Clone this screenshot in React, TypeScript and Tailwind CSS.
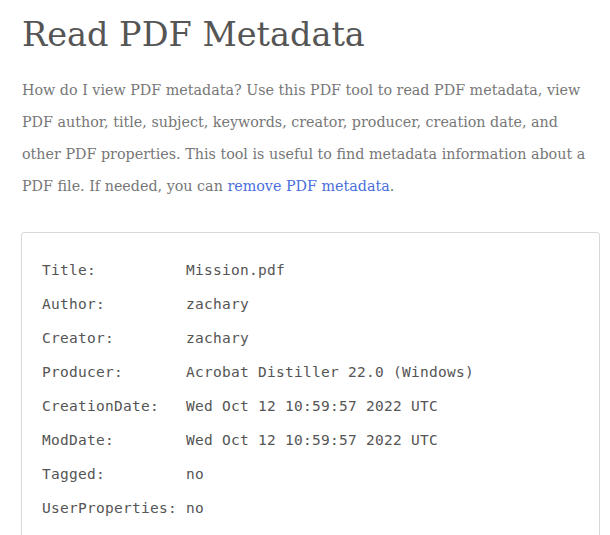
import React from "react";

const rows: [string, string][] = [
  ["Title:", "Mission.pdf"],
  ["Author:", "zachary"],
  ["Creator:", "zachary"],
  ["Producer:", "Acrobat Distiller 22.0 (Windows)"],
  ["CreationDate:", "Wed Oct 12 10:59:57 2022 UTC"],
  ["ModDate:", "Wed Oct 12 10:59:57 2022 UTC"],
  ["Tagged:", "no"],
  ["UserProperties:", "no"],
];

export default function App() {
  return (
    <div className="bg-white w-[610px] h-[535px] overflow-hidden pl-[22px] pr-[10px]">
      <h1 className="text-[33.5px] leading-[48px] pt-[11px] text-[#555] font-['DejaVu_Serif',serif] font-normal">
        Read PDF Metadata
      </h1>
      <p className="mt-[15px] text-[14.3px] leading-[32px] text-[#777] font-['DejaVu_Serif',serif]">
        How do I view PDF metadata? Use this PDF tool to read PDF metadata, view PDF author, title, subject,
        keywords, creator, producer, creation date, and other PDF properties. This tool is useful to find metadata
        information about a PDF file. If needed, you can{" "}
        <a className="text-[#4a6fdc]" href="#">remove PDF metadata</a>.
      </p>
      <div className="mt-[30px] -ml-px w-[579px] border border-[#d8d8d8] rounded-[3px] px-[20px] pt-[20px] pb-[20px] font-['DejaVu_Sans_Mono',monospace] text-[14.5px] tracking-[0.27px] leading-[34px] text-[#555]">
        {rows.map(([k, v]) => (
          <div key={k} className="flex whitespace-pre">
            <span className="w-[144px]">{k}</span>
            <span>{v}</span>
          </div>
        ))}
      </div>
    </div>
  );
}
